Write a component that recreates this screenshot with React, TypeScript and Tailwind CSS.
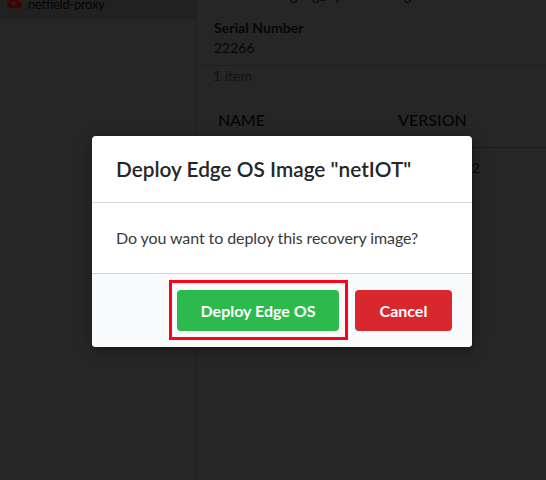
function CloudUpload() {
  return (
    <svg viewBox="0 0 640 512" className="h-[12px] w-[15px] fill-[#400008]">
      <path d="M537.6 226.6c4.1-10.7 6.4-22.4 6.4-34.6 0-53-43-96-96-96-19.7 0-38.1 6-53.3 16.2C367 64.200 315.300 32 256 32c-88.400 0-160 71.600-160 160 0 2.700.1 5.400.2 8.100C40.200 219.800 0 273.200 0 336c0 79.500 64.500 144 144 144h368c70.700 0 128-57.300 128-128 0-61.900-44-113.600-102.400-125.400zM393.400 288H328v112c0 8.800-7.200 16-16 16h-48c-8.800 0-16-7.200-16-16V288h-65.400c-14.300 0-21.400-17.200-11.300-27.300l105.400-105.400c6.200-6.200 16.400-6.200 22.600 0l105.400 105.400c10.100 10.100 2.900 27.300-11.300 27.300z" />
    </svg>
  );
}

function Sidebar() {
  return (
    <aside className="w-[197px] shrink-0 border-r border-[#202020]">
      <div className="flex h-[19px] items-start bg-[#212121] pl-[7px] text-[13px] leading-[18px] tracking-[-0.28px] text-[#050505]">
        <span className="-mt-[3px] mr-[6px]"><CloudUpload /></span>
        <span className="-mt-[5px]">netfield-proxy</span>
      </div>
    </aside>
  );
}

function Details() {
  return (
    <main className="min-w-0 flex-1 text-[14px] leading-[20px] text-[#060606]">
      <div className="flex h-[66px] flex-col border-b border-[#202020] pl-[17px]">
        <p className="-mt-[14px] flex h-[20px] pl-[76px]">
          <span className="w-[22px]">g</span>
          <span className="w-[22px]">ga</span>
          <span className="w-[70px]">y</span>
          <span>g</span>
        </p>
        <p className="mt-[12px] font-bold tracking-[0.05px]">Serial Number</p>
        <p>22266</p>
      </div>
      <p className="h-[20px] pl-[16px] text-[#131313]">1 item</p>
      <div className="mt-[14px] grid grid-cols-[180px_1fr] pl-[21px] text-[16px] font-semibold leading-[40px]">
        <span className="tracking-[-0.2px]">NAME</span>
        <span>VERSION</span>
      </div>
      <div className="mt-[7px] h-[41px] border-t border-[#1e1e1e] pr-[66px] text-right leading-[40px]">2.2.0.2</div>
    </main>
  );
}

function DeployDialog() {
  return (
    <section role="dialog" className="w-[380px] overflow-hidden rounded-[4px] bg-white shadow-[1px_3px_3px_0_rgba(0,0,0,0.2),1px_3px_15px_2px_rgba(0,0,0,0.2)]">
      <h1 className="h-[67px] border-b border-[#d9d9da] pl-[24px] text-[20.8px] font-semibold leading-[65px] text-[#262626]">Deploy Edge OS Image "netIOT"</h1>
      <p className="h-[70px] pl-[24px] text-[16px] leading-[70px] tracking-[-0.09px] text-[#3a3a3a]">Do you want to deploy this recovery image?</p>
      <div className="flex h-[74px] items-center justify-end border-t border-[#d5d5d6] bg-[#f9fafb] pr-[20px] text-[16px] font-bold text-white">
        <div className="mr-[7px] flex h-[60px] w-[179px] -translate-y-px items-center border-[3px] border-[#ff0019] pl-[5px]">
          <button className="h-[41px] w-[162px] translate-y-px rounded-[4px] bg-[#2cba4d]">Deploy Edge OS</button>
        </div>
        <button className="h-[41px] w-[97px] rounded-[4px] bg-[#d9272e]">Cancel</button>
      </div>
    </section>
  );
}

export default function App() {
  return (
    <div className="relative flex h-[480px] w-[546px] overflow-hidden bg-[#262626] font-['Lato',sans-serif]">
      <Sidebar />
      <Details />
      <div className="absolute left-[92px] top-[136px]"><DeployDialog /></div>
    </div>
  );
}
